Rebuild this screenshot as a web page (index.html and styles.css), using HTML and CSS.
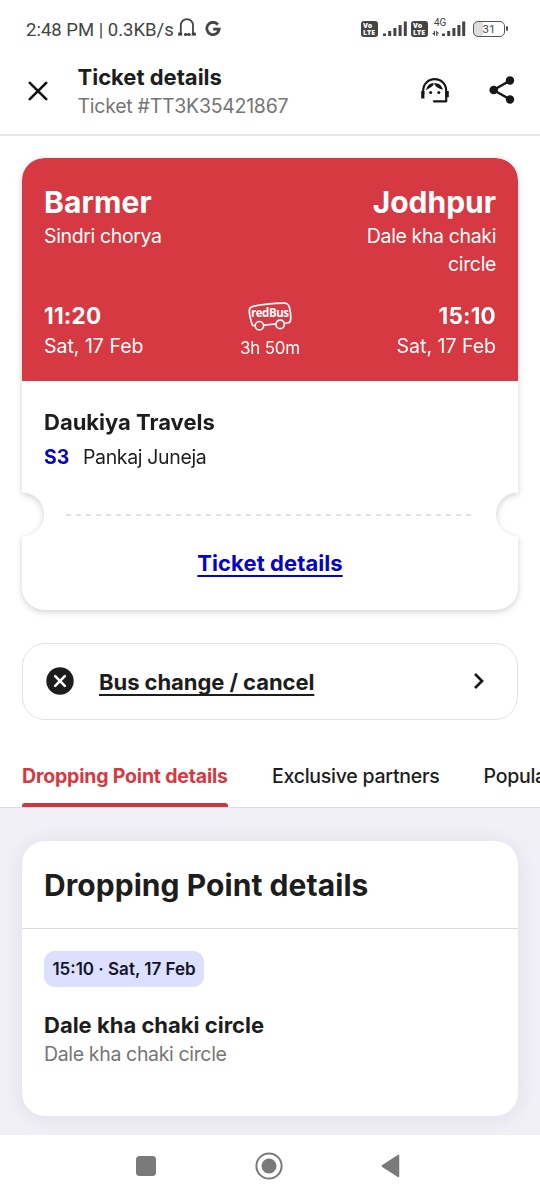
FILE: index.html
```html
<!DOCTYPE html>
<html lang="en">
<head>
<meta charset="utf-8">
<meta name="viewport" content="width=device-width">
<title>Ticket details</title>
<link rel="stylesheet" href="styles.css">
</head>
<body>
<div class="screen">
  <div class="statusbar">
    <span class="status-text">2:48 PM | 0.3KB/s</span>
    <svg class="headset-icon" width="20" height="19" viewBox="0 0 20 19" fill="none" stroke="#444" stroke-width="1.8">
      <path d="M1 16.500h4.200M3.800 16.500V7.300a6.100 6.100 0 0 1 12.200 0v9.200M7.500 16.500H13M14.600 16.500H19"/>
      <path d="M1.500 14.500h3.500v2.800H1.500zM15 14.500h3.500v2.800H15z" fill="#444" stroke="none"/>
      <circle cx="8.500" cy="16.500" r="1.500" fill="#444" stroke="none"/><circle cx="12.200" cy="16.500" r="1.500" fill="#444" stroke="none"/>
    </svg>
    <svg class="google-icon" width="16" height="16" viewBox="0 0 16 16" fill="none" stroke="#444" stroke-width="2.8">
      <path d="M12.900 3.600A6.200 6.200 0 1 0 14.200 8.200H8.200"/>
    </svg>
    <div class="status-icons">
      <span class="volte"><span>Vo</span><span>LTE</span></span>
      <svg class="signal" width="25" height="16" viewBox="0 0 25 16" fill="#444"><path d="M0 12.500h3V15H0zM5.200 10h3v5h-3zM10.400 7h3v8h-3zM15.600 4h3v11h-3zM20.800.5h3V15h-3z"/></svg>
      <span class="volte volte-second"><span>Vo</span><span>LTE</span></span>
      <span class="network">
        <span class="network-label">4G</span>
        <svg width="34" height="16" viewBox="0 0 34 16" fill="#444"><path d="M10 12.500h3V15h-3zM15.200 10h3v5h-3zM20.400 7h3v8h-3zM25.400 4h3v11h-3zM30.200.5h3V15h-3zM0 12h1.800v-2h1.200v5zM4.200 9.500l3 3H5.400V15H4.200z"/></svg>
      </span>
      <span class="battery">31</span>
    </div>
  </div>

  <header class="appbar">
    <svg class="close-icon" width="20" height="20" viewBox="0 0 20 20" fill="none" stroke="#111" stroke-width="2.600" stroke-linecap="round"><path d="M1.800 1.800l16.400 16.400M18.200 1.800L1.800 18.200"/></svg>
    <div class="appbar-text">
      <h1 class="appbar-title">Ticket details</h1>
      <p class="appbar-sub">Ticket #TT3K35421867</p>
    </div>
    <svg class="agent-icon" width="30" height="27" viewBox="0 0 30 27" fill="none" stroke="#161616" stroke-width="2.200">
      <path d="M3.200 17V14C3.200 7 8 2.200 14.700 2.200S26.200 7 26.200 14v10.300H14" stroke-linecap="round" stroke-linejoin="round"/>
      <path d="M2.800 14v7.500M27.200 14v6.200" stroke-width="3.200"/>
      <path d="M6 13.300C7 8.500 10.500 5.500 13.900 6.600 13.500 9.500 10 11 6 13.300zM13.900 6.600C18 5.400 22 8.500 23 12.800 18.500 11.800 15.500 10 13.900 6.600z" fill="#161616" stroke="none"/>
      <circle cx="10.600" cy="15.600" r="1.500" fill="#161616" stroke="none"/><circle cx="18.800" cy="15.600" r="1.500" fill="#161616" stroke="none"/>
    </svg>
    <svg class="share-icon" width="26" height="28" viewBox="0 0 26 28" fill="#161616"><path d="M4.500 14L21 4.500M4.500 14L21 23.500" stroke="#161616" stroke-width="2.400"/><circle cx="4.700" cy="14" r="4.300"/><circle cx="21" cy="4.500" r="4.200"/><circle cx="21" cy="23.500" r="4.200"/></svg>
  </header>

  <main>
    <section class="ticket">
      <div class="ticket-body">
        <div class="journey">
          <div class="cities">
            <div class="stop">
              <h2 class="city">Barmer</h2>
              <p class="place">Sindri chorya</p>
            </div>
            <div class="stop stop-end">
              <h2 class="city city-end">Jodhpur</h2>
              <p class="place">Dale kha chaki circle</p>
            </div>
          </div>
          <div class="times">
            <div>
              <p class="time">11:20</p>
              <p class="date">Sat, 17 Feb</p>
            </div>
            <div class="trip">
              <svg class="bus" width="44" height="29" viewBox="0 0 44 29" fill="none" stroke="#fff" stroke-width="1.700">
                <path d="M7 23.500H4.500C3 19 1 13 1.300 8.200 1.500 5.800 2.600 5 5 4.400 14 2.300 25 1.300 36 1.200c3.500 0 4.600 1.200 5.500 4.600 1 4 1.600 9 .9 13.200-.2 1.300-1 1.800-2.500 2h-2.700M15.600 23.200L28 22"/>
                <circle cx="11.400" cy="23.700" r="4.200"/><circle cx="32.200" cy="22.400" r="4.200"/>
                <text class="bus-name" x="3" y="14.800" textLength="38">redBus</text>
              </svg>
              <p class="duration">3h 50m</p>
            </div>
            <div class="time-end">
              <p class="time">15:10</p>
              <p class="date">Sat, 17 Feb</p>
            </div>
          </div>
        </div>
        <div class="passenger">
          <h3 class="operator">Daukiya Travels</h3>
          <p class="seat-row"><b class="seat">S3</b><span>Pankaj Juneja</span></p>
        </div>
        <svg class="tear" width="408" height="2" viewBox="0 0 408 2"><path d="M0 1h406" stroke="#d8d8d8" stroke-width="1.300" stroke-dasharray="5 5"/></svg>
        <a class="ticket-link">Ticket details</a>
      </div>
    </section>

    <section class="change">
      <svg width="28" height="28" viewBox="0 0 28 28"><circle cx="14" cy="14" r="13.700" fill="#1d1d1d"/><path d="M9.200 9.200l9.600 9.600M18.800 9.200l-9.600 9.600" stroke="#fff" stroke-width="2.600" stroke-linecap="round"/></svg>
      <a class="change-link">Bus change / cancel</a>
      <svg class="chevron" width="10" height="16" viewBox="0 0 10 16" fill="none" stroke="#161616" stroke-width="2.700"><path d="M1 1l7 7-7 7"/></svg>
    </section>

    <nav class="tabs">
      <a class="tab tab-active">Dropping Point details</a>
      <a class="tab tab-partners">Exclusive partners</a>
      <a class="tab tab-popular">Popular</a>
    </nav>

    <section class="panel">
      <article class="card">
        <h2 class="card-title">Dropping Point details</h2>
        <div class="card-body">
          <span class="pill">15:10 · Sat, 17 Feb</span>
          <h3 class="point">Dale kha chaki circle</h3>
          <p class="point-sub">Dale kha chaki circle</p>
        </div>
      </article>
    </section>
  </main>

  <footer class="navbar">
    <svg width="20" height="20" viewBox="0 0 20 20"><rect width="20" height="20" rx="3.500" fill="#7a7a7a"/></svg>
    <svg class="home" width="28" height="28" viewBox="0 0 28 28"><circle cx="14" cy="14" r="12.600" fill="none" stroke="#7a7a7a" stroke-width="2"/><circle cx="14" cy="14" r="7.500" fill="#7a7a7a"/></svg>
    <svg class="back" width="19" height="24" viewBox="0 0 19 24"><path d="M1.300 12L17.500 1.500v21z" fill="#7a7a7a" stroke="#7a7a7a" stroke-width="1.500" stroke-linejoin="round"/></svg>
  </footer>
</div>
</body>
</html>
```
FILE: styles.css
```css
* { box-sizing: border-box; margin: 0; padding: 0; }
body { background: #fff; font-family: Inter, "Liberation Sans", sans-serif; color: #1d1d1d; }
.screen { width: 540px; height: 1200px; overflow: hidden; display: flex; flex-direction: column; }

.statusbar { height: 56px; padding: 2px 35px 0 26px; display: flex; align-items: center; color: #444; }
.status-text { font: 400 18.500px/24px Roboto, sans-serif; white-space: nowrap; width: 151px; padding-top: 1px; }
.headset-icon { margin-top: -3px; }
.google-icon { margin-left: 8px; }
.status-icons { margin-left: auto; display: flex; align-items: center; }
.volte { width: 17px; height: 16px; border-radius: 3px; background: #444; color: #fff; display: flex; flex-direction: column; justify-content: center; padding-left: 2px; font: 800 7px/7px "Open Sans", sans-serif; }
.volte span { height: 7px; overflow: hidden; }
.signal { margin-left: 5px; }
.volte-second { margin-left: 3px; }
.network { width: 34px; height: 16px; margin-left: 4px; position: relative; }
.network svg { display: block; }
.network-label { position: absolute; left: 2px; top: -3px; font: 400 10px/10px Roboto, sans-serif; }
.battery { width: 32px; height: 16px; margin-left: 7px; border: 1.500px solid #555; border-radius: 5px; font: 400 11.500px/14px Roboto, sans-serif; text-align: center; position: relative; background: linear-gradient(90deg, #ddd 31%, #fff 31%); }
.battery::after { content: ""; position: absolute; right: -4px; top: 4px; width: 2px; height: 5px; background: #555; border-radius: 1px; }

.appbar { height: 80px; border-bottom: 2px solid #e7e7e7; padding: 7px 25.500px 0 28px; display: flex; }
.close-icon { margin-top: 17.500px; }
.appbar-text { margin-left: 29.500px; flex: 1; }
.appbar-title { font-size: 22px; line-height: 29px; font-weight: 700; }
.appbar-sub { font-size: 19.500px; line-height: 29px; color: #757575; letter-spacing: -.27px; }
.agent-icon { margin: 14px 38.500px 0 0; }
.share-icon { margin-top: 13px; }

.ticket { margin: 22px 22px 0; filter: drop-shadow(0 2px 3px rgba(0,0,0,.18)); }
.ticket-body { height: 452px; border-radius: 22px; overflow: hidden; background: #fff; display: flex; flex-direction: column;
  -webkit-mask: radial-gradient(circle at 0 356.500px, transparent 21.500px, #000 22.500px) left / 50% 100% no-repeat, radial-gradient(circle at 100% 356.500px, transparent 21.500px, #000 22.500px) right / 50% 100% no-repeat; }
.journey { height: 223px; background: #d63941; color: #fff; padding: 24px 22px 0; }
.cities { display: flex; justify-content: space-between; height: 119px; }
.stop-end { text-align: right; width: 150px; }
.city { font-size: 30px; line-height: 40px; font-weight: 700; letter-spacing: .1px; }
.city-end { letter-spacing: 0; }
.place { font-size: 19.500px; line-height: 27.500px; margin-top: 1px; letter-spacing: -.37px; }
.times { display: flex; justify-content: space-between; }
.time { font-size: 22.500px; line-height: 30px; font-weight: 700; letter-spacing: .2px; }
.date { font-size: 19.500px; line-height: 30px; }
.time-end { text-align: right; }
.trip { text-align: center; width: 80px; }
.bus { display: block; margin: 1px auto 0; }
.bus-name { font: 700 11.500px "Open Sans", sans-serif; fill: #fff; stroke: none; }
.duration { font-size: 17px; line-height: 24px; margin-top: 5px; letter-spacing: -.2px; }
.passenger { padding: 25px 22px 0; height: 133px; }
.operator { font-size: 22px; line-height: 32px; font-weight: 700; }
.seat-row { font-size: 19.500px; line-height: 30px; margin-top: 4px; display: flex; letter-spacing: -.35px; }
.seat { color: #0802c4; width: 39px; letter-spacing: 0; }
.tear { display: block; align-self: center; }
.ticket-link { align-self: center; margin-top: 31px; font-size: 22px; line-height: 32px; font-weight: 700; color: #0802c4; text-decoration: underline; text-decoration-thickness: 1.500px; text-underline-offset: 4px; letter-spacing: .07px; }

.change { margin: 33px 22px 0; height: 77px; border: 1.500px solid #e2e2e2; border-radius: 23px; display: flex; align-items: center; padding: 0 33px 1px 23px; }
.change-link { margin-left: 25px; font-size: 22px; line-height: 30px; font-weight: 700; text-decoration: underline; text-decoration-thickness: 1.500px; text-underline-offset: 4px; text-decoration-skip-ink: none; letter-spacing: -.06px; padding-top: 1px; }
.chevron { margin-left: auto; }

.tabs { height: 88px; padding: 36px 0 0 22px; border-bottom: 1px solid #dcdce0; display: flex; gap: 44px; white-space: nowrap; overflow: hidden; }
.tab { flex: none; font-size: 19.500px; line-height: 40px; font-weight: 500; height: 51px; letter-spacing: -.25px; }
.tab-active { color: #d63941; font-weight: 700; width: 206px; letter-spacing: -.19px; position: relative; }
.tab-active::after { content: ""; position: absolute; left: 0; right: 0; bottom: 0; height: 4px; background: #d0363f; border-radius: 3px 3px 0 0; }
.tab-partners { width: 167.500px; }

.panel { background: #f1f0f7; height: 327px; padding: 33px 22px 0; overflow: hidden; }
.card { height: 275px; background: #fff; border-radius: 23px; box-shadow: 0 2px 22px rgba(30,20,50,.08); }
.card-title { height: 88px; padding: 24px 22px 0; border-bottom: 1px solid #dcdcdc; font-size: 30px; line-height: 40px; font-weight: 700; letter-spacing: .06px; }
.card-body { padding: 22px; display: flex; flex-direction: column; align-items: flex-start; }
.pill { height: 36px; width: 160px; border-radius: 11px; background: #dddfff; color: #14142b; font-size: 17px; line-height: 36px; font-weight: 600; text-align: center; white-space: nowrap; }
.point { margin-top: 23px; font-size: 22px; line-height: 30px; font-weight: 700; }
.point-sub { font-size: 19.500px; line-height: 29px; color: #757575; letter-spacing: -.35px; }

.navbar { height: 65px; background: #fff; display: flex; align-items: center; padding: 0 140px 4px 136px; justify-content: space-between; }
```
